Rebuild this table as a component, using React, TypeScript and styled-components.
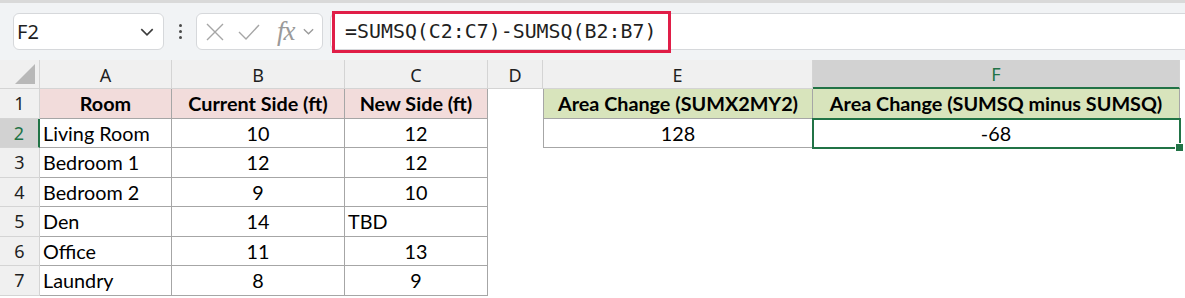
import React from 'react';
import styled, { createGlobalStyle, css } from 'styled-components';

const GlobalStyle = createGlobalStyle`
  html, body {
    margin: 0;
    padding: 0;
    background: #ffffff;
    overflow: hidden;
  }
`;

const GREEN = '#217346';
const GRID = '#d4d4d4';
const EDGE = '#a6a6a6';

const Page = styled.div`
  width: 1185px;
  height: 298px;
  display: flex;
  flex-direction: column;
  background: #ffffff;
`;

const FormulaBar = styled.div`
  height: 60px;
  box-sizing: border-box;
  border-top: 3px solid #d9d9d9;
  background: #f1f3f5;
  display: flex;
  align-items: center;
  padding: 0 0 0 13px;
`;

const NameBox = styled.div`
  width: 151px;
  height: 37px;
  box-sizing: border-box;
  background: #ffffff;
  border: 1px solid #d6d8db;
  border-radius: 6px;
  display: flex;
  align-items: center;
  justify-content: space-between;
  padding: 0 8px 0 3px;
  font-family: 'Noto Sans', 'Open Sans', sans-serif;
  font-size: 20px;
  color: #1f1f1f;
`;

const Grip = styled.div`
  width: 32px;
  display: flex;
  flex-direction: column;
  align-items: center;
  gap: 3px;

  span {
    width: 3px;
    height: 3px;
    border-radius: 50%;
    background: #4a4a4a;
  }
`;

const FxBox = styled.div`
  width: 127px;
  height: 37px;
  box-sizing: border-box;
  background: #ffffff;
  border: 1px solid #d6d8db;
  border-radius: 6px;
  display: flex;
  align-items: center;
  padding: 0 4px 0 8px;
  gap: 13px;
`;

const FxText = styled.span`
  font-family: 'Liberation Serif', serif;
  font-style: italic;
  font-size: 27px;
  line-height: 1;
  color: #9a9a9a;
  letter-spacing: -1px;
  margin-left: 4px;
  margin-right: -6px;
`;

const InputArea = styled.div`
  flex: 1;
  margin-left: 7px;
  height: 37px;
  box-sizing: border-box;
  background: #ffffff;
  border: 1px solid #d6d8db;
  border-right: none;
  border-radius: 6px 0 0 6px;
  display: flex;
  align-items: center;
`;

const FormulaHighlight = styled.div`
  margin-left: 1px;
  width: 339px;
  height: 42px;
  box-sizing: border-box;
  border: 3px solid #e01e48;
  display: flex;
  align-items: center;
  padding-left: 10px;
  font-family: 'DejaVu Sans Mono', 'Liberation Mono', monospace;
  font-size: 19.9px;
  color: #1f1f1f;
  white-space: nowrap;
`;

const Sheet = styled.div`
  display: grid;
  grid-template-columns: 40px 132px 173px 143px 55px 270px 367px 5px;
  grid-template-rows: 29px repeat(7, 29.5px);
  font-family: 'Lato', 'Liberation Sans', sans-serif;
  font-size: 19.8px;
  color: #000;
`;

const ColHead = styled.div<{ $active?: boolean }>`
  box-sizing: border-box;
  background: ${(p) => (p.$active ? '#d2d2d2' : '#f0f0f0')};
  color: ${(p) => (p.$active ? GREEN : '#1f1f1f')};
  border-right: 1px solid ${GRID};
  border-bottom: ${(p) => (p.$active ? `2px solid ${GREEN}` : `1px solid ${GRID}`)};
  display: flex;
  align-items: center;
  justify-content: center;
  font-family: 'Noto Sans', 'Open Sans', sans-serif;
  font-size: 18px;
  padding-top: 1px;
`;

const Corner = styled.div`
  box-sizing: border-box;
  background: #f0f0f0;
  border-right: 1px solid ${GRID};
  border-bottom: 1px solid ${GRID};
  position: relative;

  &::after {
    content: '';
    position: absolute;
    right: 4px;
    bottom: 4px;
    width: 0;
    height: 0;
    border-left: 20px solid transparent;
    border-bottom: 20px solid #b8b8b8;
  }
`;

const RowHead = styled.div<{ $active?: boolean }>`
  box-sizing: border-box;
  background: ${(p) => (p.$active ? '#d2d2d2' : '#f0f0f0')};
  color: ${(p) => (p.$active ? GREEN : '#1f1f1f')};
  border-right: ${(p) => (p.$active ? `2px solid ${GREEN}` : `1px solid ${GRID}`)};
  border-bottom: 1px solid ${GRID};
  display: flex;
  align-items: center;
  justify-content: center;
  font-family: 'Noto Sans', 'Open Sans', sans-serif;
  font-size: 18px;
`;

type Fill = 'none' | 'pink' | 'green';

const fills: Record<Fill, string> = {
  none: '#ffffff',
  pink: '#f2dcdb',
  green: '#d8e4bc',
};

const Cell = styled.div<{
  $fill?: Fill;
  $bold?: boolean;
  $align?: 'left' | 'center';
  $boxed?: boolean;
  $leftEdge?: boolean;
  $selected?: boolean;
}>`
  box-sizing: border-box;
  position: relative;
  background: ${(p) => fills[p.$fill || 'none']};
  font-weight: ${(p) => (p.$bold ? 700 : 400)};
  display: flex;
  align-items: center;
  justify-content: ${(p) => (p.$align === 'left' ? 'flex-start' : 'center')};
  padding: 0 3px;
  white-space: nowrap;
  ${(p) =>
    p.$boxed &&
    css`
      border-right: 1px solid ${EDGE};
      border-bottom: 1px solid ${EDGE};
    `}
  ${(p) =>
    p.$leftEdge &&
    css`
      border-left: 1px solid ${EDGE};
    `}
  ${(p) =>
    p.$selected &&
    css`
      z-index: 2;
      outline: 2px solid ${GREEN};
      outline-offset: -1px;

      &::after {
        content: '';
        position: absolute;
        right: -5px;
        bottom: -5px;
        width: 7px;
        height: 7px;
        background: ${GREEN};
        border: 1px solid #ffffff;
      }
    `}
`;

const Filler = styled.div``;

type CellSpec = {
  text?: string;
  fill?: Fill;
  bold?: boolean;
  align?: 'left' | 'center';
  boxed?: boolean;
  leftEdge?: boolean;
  selected?: boolean;
};

const columns = ['A', 'B', 'C', 'D', 'E', 'F'];

const rooms: [string, string, string][] = [
  ['Living Room', '10', '12'],
  ['Bedroom 1', '12', '12'],
  ['Bedroom 2', '9', '10'],
  ['Den', '14', 'TBD'],
  ['Office', '11', '13'],
  ['Laundry', '8', '9'],
];

const buildRows = (): CellSpec[][] => {
  const rows: CellSpec[][] = [];
  rows.push([
    { text: 'Room', fill: 'pink', bold: true, boxed: true },
    { text: 'Current Side (ft)', fill: 'pink', bold: true, boxed: true },
    { text: 'New Side (ft)', fill: 'pink', bold: true, boxed: true },
    {},
    { text: 'Area Change (SUMX2MY2)', fill: 'green', bold: true, boxed: true, leftEdge: true },
    { text: 'Area Change (SUMSQ minus SUMSQ)', fill: 'green', bold: true, boxed: true },
  ]);
  rooms.forEach(([room, cur, next], i) => {
    const row: CellSpec[] = [
      { text: room, align: 'left', boxed: true },
      { text: cur, boxed: true },
      { text: next, align: next === 'TBD' ? 'left' : 'center', boxed: true },
      {},
    ];
    if (i === 0) {
      row.push({ text: '128', boxed: true, leftEdge: true });
      row.push({ text: '-68', boxed: true, selected: true });
    } else {
      row.push({}, {});
    }
    rows.push(row);
  });
  return rows;
};

const XIcon = () => (
  <svg width="20" height="20" viewBox="0 0 20 20">
    <path d="M2 2 L18 18 M18 2 L2 18" stroke="#a6a6a6" strokeWidth="1.4" fill="none" />
  </svg>
);

const CheckIcon = () => (
  <svg width="22" height="20" viewBox="0 0 22 20">
    <path d="M1 10 L8 17 L21 3" stroke="#a6a6a6" strokeWidth="1.4" fill="none" />
  </svg>
);

const Chevron = ({ size = 14, color = '#444' }: { size?: number; color?: string }) => (
  <svg width={size} height={size} viewBox="0 0 14 14">
    <path d="M2 4.5 L7 9.5 L12 4.5" stroke={color} strokeWidth="1.4" fill="none" />
  </svg>
);

export default function App() {
  const rows = buildRows();
  return (
    <Page>
      <GlobalStyle />
      <FormulaBar>
        <NameBox>
          <span>F2</span>
          <Chevron size={16} color="#3c3c3c" />
        </NameBox>
        <Grip>
          <span />
          <span />
          <span />
        </Grip>
        <FxBox>
          <XIcon />
          <CheckIcon />
          <FxText>fx</FxText>
          <Chevron size={13} color="#9a9a9a" />
        </FxBox>
        <InputArea>
          <FormulaHighlight>=SUMSQ(C2:C7)-SUMSQ(B2:B7)</FormulaHighlight>
        </InputArea>
      </FormulaBar>
      <Sheet>
        <Corner />
        {columns.map((c) => (
          <ColHead key={c} $active={c === 'F'}>
            {c}
          </ColHead>
        ))}
        <Filler />
        {rows.map((row, r) => (
          <React.Fragment key={r}>
            <RowHead $active={r === 1}>{r + 1}</RowHead>
            {row.map((cell, c) => (
              <Cell
                key={c}
                $fill={cell.fill}
                $bold={cell.bold}
                $align={cell.align}
                $boxed={cell.boxed}
                $leftEdge={cell.leftEdge}
                $selected={cell.selected}
              >
                {cell.text}
              </Cell>
            ))}
            <Filler />
          </React.Fragment>
        ))}
      </Sheet>
    </Page>
  );
}
